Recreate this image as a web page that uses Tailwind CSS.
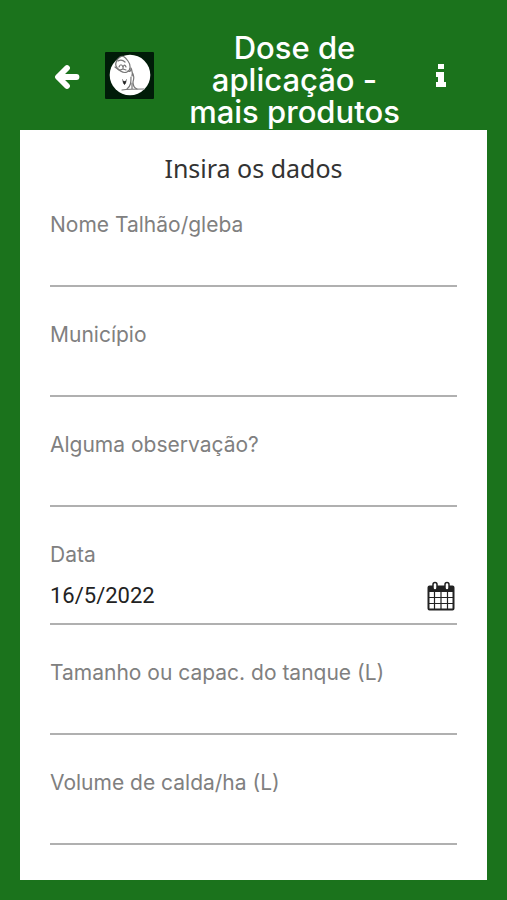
<!DOCTYPE html>
<html lang="pt-BR">
<head>
    <meta charset="UTF-8">
    <meta name="viewport" content="width=device-width, initial-scale=1.0">
    <title>Dose de aplicação - mais produtos</title>
    <script src="https://cdn.jsdelivr.net/npm/@tailwindcss/browser@4"></script>
</head>
<body class="flex min-h-screen flex-col bg-[#1b731c] px-5 pt-8 pb-5 font-['Inter',sans-serif]">
    <header class="flex items-start pb-0.5 text-white">
        <button type="button" aria-label="Voltar" class="ml-8 mt-8 shrink-0">
            <svg class="h-[26px] w-[30px]" viewBox="0 0 30 26" fill="none" stroke="currentColor" stroke-width="5.8" stroke-linecap="round" stroke-linejoin="round">
                <path d="M15 4 6 13l9 9" />
                <path d="M7 13h17.500" />
            </svg>
        </button>
        <!-- App logo -->
        <svg class="ml-[23px] mt-5 h-[47px] w-[49px] shrink-0" viewBox="0 0 49 47" fill="none" role="img" aria-label="Logo">
            <rect width="49" height="47" rx="1" fill="#001c08" />
            <circle cx="25" cy="23" r="20.3" fill="#fff" />
            <g stroke="#777" stroke-width="1.2" stroke-linecap="round" stroke-linejoin="round">
                <path d="M15 5c-3 2-5 6-4 9s7 8 11 6 4-7 1-11-5-6-8-4z" />
                <path d="M13 9c3-2 5-1 7 1M14 15c1-3 3-3 4 0M18 16c0-3 2-4 3-1M15 18l3-1 3 1M10 15l4 3" />
                <path d="M23 19c2 1 3 0 3-3 1 3 2 4 1 8M27 20c2 3 2 7 1 10 0 4 1 6 4 7M26 25c0 5 0 9-4 12" />
                <path d="M17 38c7-1 15-1 22-1M27 31v6" />
            </g>
            <path d="m18 29 1.500.5 1.500-.5-.5 2-1 1.500-1-1.500zM17 28h1M21 28h1" fill="#222" stroke="#222" stroke-width=".8" />
        </svg>
        <h1 class="mx-auto w-[228px] text-center text-[31px] leading-8 font-medium">Dose de aplicação - mais produtos</h1>
        <button type="button" aria-label="Informações" class="mr-10 mt-8 shrink-0">
            <svg class="h-6 w-3" viewBox="0 0 12 24" fill="currentColor">
                <path d="M3 0h6v5H3zM1 8h8v10h2v5H1v-5h2v-5H1z" />
            </svg>
        </button>
    </header>

    <main class="grow bg-white px-[30px] pt-[22px]">
        <h2 class="text-center font-['Noto_Sans',sans-serif] text-[25px] leading-8 text-[#333]">Insira os dados</h2>
        <form class="mt-[29px] flex flex-col gap-9 text-[21px] leading-6 text-[#808080]">
            <div class="flex flex-col">
                <label for="talhao">Nome Talhão/gleba</label>
                <input id="talhao" type="text" class="h-[50px] w-full border-b-2 border-[#b0b0b0] text-[#222] outline-none">
            </div>
            <div class="flex flex-col">
                <label for="municipio">Município</label>
                <input id="municipio" type="text" class="h-[50px] w-full border-b-2 border-[#b0b0b0] text-[#222] outline-none">
            </div>
            <div class="flex flex-col">
                <label for="observacao">Alguma observação?</label>
                <input id="observacao" type="text" class="h-[50px] w-full border-b-2 border-[#b0b0b0] text-[#222] outline-none">
            </div>
            <div class="flex flex-col">
                <label for="data">Data</label>
                <div class="flex h-[58px] items-center border-b-2 border-[#b0b0b0] pt-0.5">
                    <input id="data" type="text" value="16/5/2022" class="min-w-0 grow font-['Roboto',sans-serif] text-[22px] text-[#222] outline-none">
                    <button type="button" aria-label="Abrir calendário" class="mr-0.5 text-[#222]">
                        <svg class="h-[30px] w-7" viewBox="0 0 28 30" fill="none" stroke="currentColor">
                            <rect x="1.5" y="5.5" width="25" height="23" rx="1" stroke-width="2" />
                            <path d="M1 5h26v6H1z" fill="currentColor" stroke="none" />
                            <path d="M7.5 11v17M14 11v17M20.5 11v17M2 16.5h24M2 22.5h24" stroke-width="1.2" />
                            <rect x="6" y="1.5" width="4" height="7.5" rx="2" fill="#fff" stroke-width="1.5" />
                            <rect x="18" y="1.5" width="4" height="7.5" rx="2" fill="#fff" stroke-width="1.5" />
                        </svg>
                    </button>
                </div>
            </div>
            <div class="flex flex-col">
                <label for="tanque">Tamanho ou capac. do tanque (L)</label>
                <input id="tanque" type="text" inputmode="decimal" class="h-[50px] w-full border-b-2 border-[#b0b0b0] text-[#222] outline-none">
            </div>
            <div class="flex flex-col">
                <label for="volume">Volume de calda/ha (L)</label>
                <input id="volume" type="text" inputmode="decimal" class="h-[50px] w-full border-b-2 border-[#b0b0b0] text-[#222] outline-none">
            </div>
        </form>
    </main>
</body>
</html>
